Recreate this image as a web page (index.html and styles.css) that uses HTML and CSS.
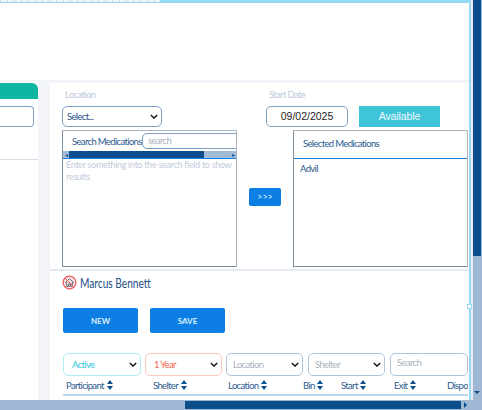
FILE: index.html
```html
<!DOCTYPE html>
<html lang="en">
<head>
<meta charset="utf-8">
<title>Medications</title>
<link rel="stylesheet" href="styles.css">
</head>
<body>
<div class="window">
  <div class="viewport">
    <div class="ruler"><div class="ruler-ticks"></div><div class="ruler-line"></div></div>
    <div class="blank"></div>
    <div class="band"></div>
    <div class="columns">
      <aside class="side">
        <div class="tab"></div>
        <div class="side-input"></div>
        <div class="side-rule"></div>
      </aside>
      <main class="main">
        <div class="form-row">
          <div class="field field-location">
            <label class="label">Location</label>
            <div class="select select-form"><span>Select...</span>
              <svg class="chev" viewBox="0 0 10 6"><path d="M1 1l4 4 4-4" fill="none" stroke="#111" stroke-width="1.7"/></svg>
            </div>
          </div>
          <div class="field">
            <label class="label">Start Date</label>
            <div class="date">09/02/2025</div>
          </div>
          <div class="available">Available</div>
        </div>
        <div class="med-row">
          <section class="panel">
            <div class="search-head">
              <span class="search-title">Search Medications</span>
              <div class="search-box">search</div>
            </div>
            <div class="mini-scroll">
              <span class="mini-arrow">◂</span>
              <span class="mini-thumb"></span>
              <span class="mini-arrow">▸</span>
            </div>
            <p class="hint">Enter something into the search field to show results</p>
          </section>
          <div class="transfer"><button class="transfer-btn">&gt;&gt;&gt;</button></div>
          <section class="panel">
            <div class="selected-head">Selected Medications</div>
            <p class="med-item">Advil</p>
          </section>
        </div>
        <div class="main-rule"></div>
        <div class="person">
          <svg class="person-icon" viewBox="0 0 16 16">
            <circle cx="8" cy="8" r="6.8" fill="#fde8e8" stroke="#ef5a5a" stroke-width="1.3"/>
            <path d="M3.5 8L8 4l4.5 4M5 7.5V12h6V7.5M7 12V9.5h2V12" fill="none" stroke="#555f6e" stroke-width="1"/>
            <path d="M3.4 3.4l9.2 9.2" stroke="#ef5a5a" stroke-width="1"/>
          </svg>
          <span class="person-name">Marcus Bennett</span>
        </div>
        <div class="actions">
          <button class="action">NEW</button>
          <button class="action">SAVE</button>
        </div>
        <div class="filters">
          <div class="select filter filter-active"><span>Active</span>
            <svg class="chev" viewBox="0 0 10 6"><path d="M1 1l4 4 4-4" fill="none" stroke="#111" stroke-width="1.7"/></svg>
          </div>
          <div class="select filter filter-year"><span>1 Year</span>
            <svg class="chev" viewBox="0 0 10 6"><path d="M1 1l4 4 4-4" fill="none" stroke="#111" stroke-width="1.7"/></svg>
          </div>
          <div class="select filter filter-muted"><span>Location</span>
            <svg class="chev" viewBox="0 0 10 6"><path d="M1 1l4 4 4-4" fill="none" stroke="#111" stroke-width="1.7"/></svg>
          </div>
          <div class="select filter filter-muted filter-shelter"><span>Shelter</span>
            <svg class="chev" viewBox="0 0 10 6"><path d="M1 1l4 4 4-4" fill="none" stroke="#111" stroke-width="1.7"/></svg>
          </div>
          <div class="filter filter-search">Search</div>
        </div>
        <div class="table-head">
          <span class="col">Participant <i class="sort"></i></span>
          <span class="col">Shelter <i class="sort"></i></span>
          <span class="col">Location <i class="sort"></i></span>
          <span class="col">Bin <i class="sort"></i></span>
          <span class="col">Start <i class="sort"></i></span>
          <span class="col">Exit <i class="sort"></i></span>
          <span class="col">Disposition</span>
        </div>
      </main>
    </div>
    <div class="handle"></div>
  </div>
  <div class="vscroll">
    <div class="vthumb"></div>
    <div class="vtrack"></div>
    <div class="varrow"></div>
  </div>
  <div class="hscroll">
    <div class="htrack"></div>
    <div class="hthumb"></div>
    <div class="harrow"></div>
  </div>
  <div class="corner"></div>
</div>
</body>
</html>
```
FILE: styles.css
```css
* { box-sizing: border-box; }
html, body { margin: 0; padding: 0; height: 100%; overflow: hidden; background: #fff; }
body { font-family: "Lato", "Liberation Sans", sans-serif; font-size: 9.5px; letter-spacing: -0.65px; color: #2a5a8e; }

.window {
  width: 482px; height: 410px;
  display: grid;
  grid-template-columns: 471px 11px;
  grid-template-rows: 400px 10px;
  background: #e9edf2;
}
.viewport {
  position: relative;
  display: flex; flex-direction: column;
  background: #fff;
  border-right: 2px solid #96d8f5;
}
.ruler { display: flex; height: 3px; flex: none; }
.ruler-ticks {
  width: 160px;
  background: repeating-linear-gradient(90deg, #cfdbe4 0 1px, #eef3f6 1px 7px);
  border-bottom: 1px solid #96d8f5;
}
.ruler-line { flex: 1; background: #96d8f5; }
.blank { height: 77px; flex: none; }
.band { height: 3px; flex: none; background: #f1f4f9; }

.columns { display: flex; flex: 1; min-height: 0; }
.side {
  width: 50px; flex: none;
  padding-right: 12px;
  background: linear-gradient(90deg, #fff 38px, #f2f4f9 38px);
  display: flex; flex-direction: column; align-items: flex-start;
}
.tab { width: 38px; height: 16px; background: #0db6a0; border-top-right-radius: 6px; }
.side-input {
  width: 34px; height: 21px; margin-top: 7px; flex: none;
  border: 1px solid #7fa0c2; border-left: 0;
  border-radius: 0 4px 4px 0;
}
.side-rule { width: 38px; height: 1px; margin-top: 32px; background: #d6e0ea; }

.main { flex: 1; min-width: 0; padding-left: 12px; overflow: hidden; }

.form-row { display: flex; align-items: flex-end; height: 44px; }
.field { display: flex; flex-direction: column; }
.field-location { width: 204px; }
.label { line-height: 12px; color: #bccadb; margin: 0 0 5px 3px; }
.select {
  display: flex; align-items: center; justify-content: space-between;
  background: #fff; border-radius: 5px;
}
.select-form {
  width: 100px; height: 21px; padding: 0 3px 0 4px;
  border: 1px solid #7fa0c2;
  color: #1d4f86;
}
.chev { width: 8px; height: 5px; flex: none; }
.date {
  width: 82px; height: 21px;
  border: 1px solid #7fa0c2; border-radius: 5px;
  font: 10.5px/18px "Liberation Sans", sans-serif; letter-spacing: 0; color: #222;
  text-align: center;
}
.available {
  width: 81px; height: 21px; margin-left: 11px;
  background: #3fc4da; color: #eefbfd;
  font: 10.5px/21px "Liberation Sans", sans-serif; letter-spacing: -0.1px; text-align: center;
}

.med-row { display: flex; margin-top: 3px; height: 137px; }
.panel {
  width: 175px; height: 137px; flex: none;
  border: 1px solid #80919f; border-top-color: #a9b6c2; border-right-color: #a9b6c2;
  overflow: hidden; background: #fff;
}
.search-head { display: flex; align-items: center; height: 20px; padding-left: 9px; white-space: nowrap; }
.search-title { width: 70px; flex: none; color: #2a5a8e; }
.search-box {
  flex: none; width: 120px; height: 16px;
  border: 1px solid #7fa0c2; border-radius: 5px;
  line-height: 14px; padding-left: 5px; color: #a9b3be;
}
.mini-scroll { display: flex; align-items: stretch; height: 7px; background: #a2bbd6; }
.mini-arrow { width: 6px; font-size: 6px; line-height: 7px; text-align: center; color: #0c4e8c; }
.mini-thumb { width: 135px; margin-right: 26px; background: #0c4e8c; }
.hint {
  margin: 0; padding: 0 3px; border-top: 1px solid #1a7fe0;
  font-size: 9px; letter-spacing: -0.3px; line-height: 12px; color: #bfcbdc;
}
.transfer { width: 56px; flex: none; display: flex; justify-content: center; align-items: flex-start; padding-top: 58px; }
.transfer-btn {
  width: 32px; height: 18px; border: 0; padding: 0; border-radius: 2px;
  background: #0d7fe4; color: #dcefff; font: 9px/18px "Lato", sans-serif;
}
.selected-head {
  height: 28px; padding: 0 9px;
  line-height: 26px; color: #2a5a8e;
  border-bottom: 1px solid #1a7fe0;
}
.med-item { margin: 4px 6px; line-height: 12px; color: #2a5a8e; }

.main-rule { height: 2px; margin-top: 2px; margin-left: -12px; background: #e3eaf2; }
.person { display: flex; align-items: center; height: 20px; margin-top: 1px; }
.person-icon { width: 15px; height: 15px; flex: none; }
.person-name {
  margin-left: 3px; font-size: 14px; letter-spacing: 0; color: #1d4f86;
  transform: scaleX(0.725); transform-origin: left center; white-space: nowrap;
}

.actions { display: flex; gap: 12px; margin: 16px 0 0 1px; }
.action {
  width: 75px; height: 25px; border: 0; border-radius: 2px; padding: 0;
  background: #0d7fe4; color: #dcefff; font: 700 8px "Lato", sans-serif;
}

.filters { display: flex; gap: 4px; margin: 20px 0 0 1px; }
.filter { width: 77px; height: 23px; flex: none; padding: 0 3px 0 8px; border-radius: 5px; background: #fff; }
.filter-active { width: 78px; border: 1px solid #b3ecf2; color: #2fcbdc; }
.filter-year { border: 1px solid #fcc8bd; color: #f4654c; }
.filter-muted { border: 1px solid #b0c4da; color: #a9b3be; padding-left: 6px; }
.filter-shelter { margin-left: 1px; }
.filter-search { width: 78px; margin-left: 1px; border: 1px solid #b0c4da; color: #a9b3be; line-height: 17px; padding-left: 6px; }

.table-head {
  height: 19px; margin: 1px 0 0 1px; width: 405px;
  border-bottom: 2px solid #b8d6ee;
  line-height: 18px; color: #2a5a8e;
  display: grid; grid-template-columns: 87px 75px 75px 38px 53px 53px 25px;
  white-space: nowrap; overflow: hidden;
  padding-left: 3px;
}
.sort { display: inline-block; position: relative; width: 6px; height: 10px; margin-left: 1px; vertical-align: -1px; }
.sort::before, .sort::after {
  content: ""; position: absolute; left: 0;
  border-left: 3px solid transparent; border-right: 3px solid transparent;
}
.sort::before { top: 0; border-bottom: 4px solid #0c4e8c; }
.sort::after { bottom: 0; border-top: 4px solid #0c4e8c; }

.handle {
  position: absolute; right: -3px; top: 304px;
  width: 5px; height: 5px; background: #fff; border: 1px solid #96d8f5;
}

.vscroll { grid-row: 1; grid-column: 2; display: flex; flex-direction: column; padding: 0 1px 0 2px; background: linear-gradient(90deg, #e9edf2 2px, #9fb8d3 2px); }
.vthumb { height: 256px; background: #0c4e8c; }
.vtrack { flex: 1; }
.varrow {
  align-self: center; margin-bottom: 6px;
  border-left: 3px solid transparent; border-right: 3px solid transparent;
  border-top: 3px solid #0c4e8c;
}
.hscroll { grid-row: 2; grid-column: 1; display: flex; padding: 1px 0; background: #9fb8d3; }
.htrack { width: 185px; }
.hthumb { width: 276px; background: #0c4e8c; }
.harrow {
  align-self: center; margin-left: 3px;
  border-top: 3px solid transparent; border-bottom: 3px solid transparent;
  border-left: 3px solid #0c4e8c;
}
.corner { grid-row: 2; grid-column: 2; background: #9fb8d3; }
```
